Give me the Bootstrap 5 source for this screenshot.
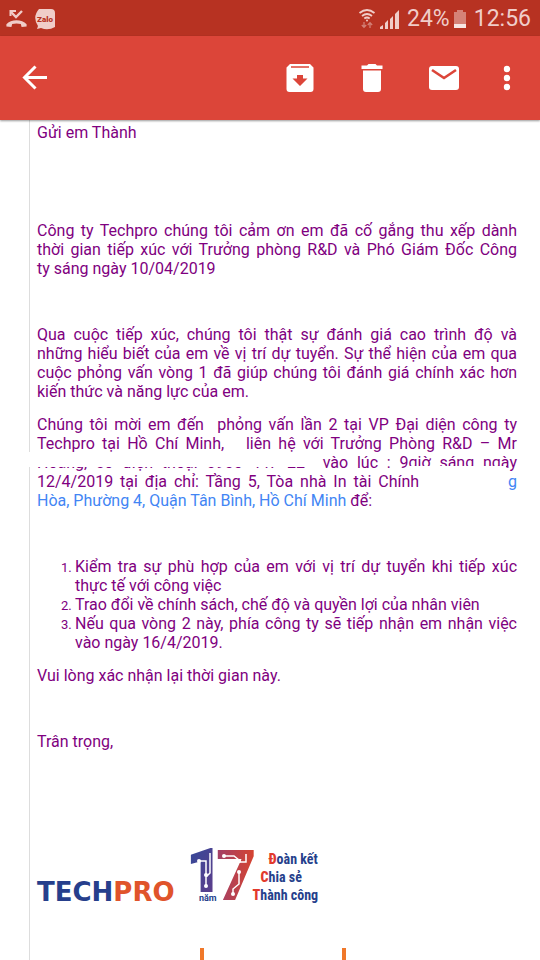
<!DOCTYPE html>
<html lang="vi">
<head>
<meta charset="utf-8">
<meta name="viewport" content="width=device-width, initial-scale=1">
<title>Thư mời phỏng vấn</title>
<link rel="stylesheet" href="https://cdn.jsdelivr.net/npm/bootstrap@5.3.0/dist/css/bootstrap.min.css">
<style>
body{font-family:Roboto,sans-serif;background:#fff;overflow-x:hidden}
.status{background:#b73222;color:#f0cdc9;height:36px;font-size:23px;line-height:34px;padding:2px 9px 0 6px}
.status svg{flex:none}
.appbar{background:#dc4539;height:84px;padding:0 17px 0 19px;box-shadow:0 1px 2px #0006;position:relative;z-index:2}
.tool{width:32px;height:32px;padding:0;border:0;background:none;color:#fff;line-height:0}
.actions{gap:40px}
.actions .tool:last-child{margin-left:-9px}
.mail{margin-left:29px;border-left:1px solid #ddd;padding:3px 23px 0 7px;color:#800080;font-size:16px;line-height:19px}
.mail p{margin:0 0 14px;text-align:justify}
.mail a{color:#4285f4;text-decoration:none}
.mail .gap-xl{margin-bottom:79px}
.mail .gap-lg{margin-bottom:47px}
.mail ol{margin:0 0 14px;padding-left:38px;text-align:justify}
.mail li::marker{font-size:13px}
.invite{position:relative}
.erased{position:absolute;left:-10px;width:280px;top:37px;height:15px;background:#fff}
.erased-low{position:absolute;right:11px;width:99px;top:51px;height:9px;background:#fff}
.blank{display:inline-block;width:82px}
.sign{margin-top:97px}
.brand-name{font-family:"DejaVu Sans",sans-serif;font-weight:700;font-size:26px;line-height:24px;color:#263f8c}
.brand-name span{color:#e0542b}
.sign svg{overflow:visible}
.slogan{font-family:"Roboto Condensed",Roboto,sans-serif;font-weight:700;font-size:14px;line-height:18px;color:#263f8c}
.slogan b{color:#e23a2c}
.ticks{margin:44px 0 0 163px;gap:138px}
.ticks i{width:4px;height:13px;background:#f0782a}
</style>
<script src="https://cdn.jsdelivr.net/npm/bootstrap@5.3.0/dist/js/bootstrap.bundle.min.js"></script>
</head>
<body>
<header>
<div class="status d-flex align-items-center">
<svg width="21" height="20" viewBox="0 0 21 20" fill="none" stroke="currentColor"><path d="M5 3l5 5 6-6" stroke-width="2.4"/><path d="M4.500 7V2H10" stroke-width="2"/><path d="M.4 17.500v-2.300C5 10 16 10 20.600 15.200v2.300l-5 .5-.8-3q-4.300-1-8.600 0l-.8 3z" fill="currentColor" stroke="none"/></svg>
<svg class="ms-2" width="20" height="21" viewBox="0 0 20 21"><path d="M4 0h12q4 0 4 4v14q-7 4-14 1l-4 1 1-3Q-3 8 4 0z" fill="currentColor"/><text x="10" y="13" text-anchor="middle" font-size="8" font-weight="900" fill="#b73222">Zalo</text></svg>
<svg class="ms-auto" width="18" height="20" viewBox="0 0 18 20" fill="none" stroke="currentColor" stroke-width="1.800"><path d="M1.500 4q7.500-6 15 0M4 7q5-4 10 0M6.300 9.500q2.700-2 5.400 0"/><circle cx="9" cy="11.500" r="1" fill="currentColor" stroke="none"/><path d="M6 13v5M3.800 16L6 18.300 8.200 16M12 19v-5M9.800 16L12 13.700l2.200 2.300" stroke-width="1.300" opacity=".5"/></svg>
<svg class="ms-1" width="19" height="19" viewBox="0 0 19 19" fill="currentColor"><path d="M0 19v-2l3-2v4zM5 19v-6l3-3v9zM10 19V9l3-3v13zM15 19V4l4-4v19z"/></svg>
<span class="ms-2">24%</span>
<svg class="ms-1" width="12" height="18" viewBox="0 0 12 18"><path d="M3 0h6v2h3v16H0V2h3z" fill="#d58278"/><path d="M0 14h12v4H0z" fill="#f8e6e4"/></svg>
<span class="ms-2">12:56</span>
</div>
<div class="appbar d-flex align-items-center justify-content-between">
<button class="tool" type="button" aria-label="Quay lại"><svg width="32" height="32" viewBox="0 0 32 32" fill="none" stroke="currentColor" stroke-width="3"><path d="M28 15.500H7M16.500 4.500l-11 11 11 11"/></svg></button>
<div class="actions d-flex">
<button class="tool" type="button" aria-label="Lưu trữ"><svg width="32" height="32" viewBox="0 0 32 32"><path d="M6 2h20l3.500 3.500V27a3 3 0 0 1-3 3h-21a3 3 0 0 1-3-3V5.500z" fill="#fff"/><path d="M7 4.300h18v1.400H7zM13 13h6v3.500h4.500L16 24l-7.500-7.500H13z" fill="#dc4539"/></svg></button>
<button class="tool" type="button" aria-label="Xóa"><svg width="32" height="32" viewBox="0 0 32 32" fill="#fff"><path d="M5.500 3.500H11L12.500 2h7L21 3.500h5.500V7h-21zM7 8.500h18V27a3 3 0 0 1-3 3H10a3 3 0 0 1-3-3z"/></svg></button>
<button class="tool" type="button" aria-label="Đánh dấu chưa đọc"><svg width="32" height="32" viewBox="0 0 32 32"><rect x="1" y="4" width="30" height="24" rx="3" fill="#fff"/><path d="M4 8l12 8 12-8" fill="none" stroke="#dc4539" stroke-width="2.600"/></svg></button>
<button class="tool" type="button" aria-label="Thêm"><svg width="32" height="32" viewBox="0 0 32 32" fill="#fff"><circle cx="16" cy="7" r="3.200"/><circle cx="16" cy="16" r="3.200"/><circle cx="16" cy="25" r="3.200"/></svg></button>
</div>
</div>
</header>
<main class="mail">
<p class="gap-xl">Gửi em Thành</p>
<p class="gap-lg">Công ty Techpro chúng tôi cảm ơn em đã cố gắng thu xếp dành thời&nbsp;gian tiếp xúc với Trưởng phòng R&amp;D và Phó Giám Đốc Công ty&nbsp;sáng&nbsp;ngày 10/04/2019</p>
<p>Qua cuộc tiếp xúc, chúng tôi thật sự đánh giá cao trình độ và những&nbsp;hiểu biết của em về vị trí dự tuyển. Sự thể hiện của em qua cuộc&nbsp;phỏng vấn vòng 1 đã giúp chúng tôi đánh giá chính xác hơn kiến&nbsp;thức và năng lực của em.</p>
<p class="invite gap-lg">Chúng tôi mời em đến&nbsp; phỏng vấn lần 2 tại VP Đại diện công ty Techpro tại Hồ Chí Minh,&nbsp;&nbsp; liên hệ với Trưởng Phòng R&amp;D – Mr Hoàng, số điện thoại 0905 447 22&nbsp; vào lúc : 9giờ sáng ngày 12/4/2019 tại địa chỉ: Tầng 5, Tòa nhà In tài Chính <span class="blank"></span><a href="#">g Hòa, Phường 4, Quận Tân Bình, Hồ Chí Minh</a> để:<span class="erased"></span><span class="erased-low"></span></p>
<ol><li>Kiểm tra sự phù hợp của em với vị trí dự tuyển khi tiếp xúc thực tế với công việc</li><li>Trao đổi về chính sách, chế độ và quyền lợi của nhân viên</li><li>Nếu qua vòng 2 này, phía công ty sẽ tiếp nhận em nhận việc vào ngày 16/4/2019.</li></ol>
<p class="gap-lg">Vui lòng xác nhận lại thời gian này.</p>
<p>Trân trọng,</p>
<div class="sign d-flex align-items-end">
<div class="brand-name">TECH<span>PRO</span></div>
<svg class="ms-3" width="62" height="56" viewBox="0 0 62 56" role="img" aria-label="17 năm">
<defs><linearGradient id="g1" x1="0" y1="0" x2="1" y2="1"><stop offset="0" stop-color="#2d4b9c"/><stop offset="1" stop-color="#6a3a86"/></linearGradient><linearGradient id="g7" x1="0" y1="0" x2="1" y2="0"><stop offset="0" stop-color="#a0406a"/><stop offset="1" stop-color="#d9442c"/></linearGradient></defs>
<text x="-4" y="43" font-size="60" font-weight="900" fill="url(#g1)" stroke="url(#g1)" stroke-width="2">1</text>
<text x="25" y="52" font-size="70" font-weight="900" fill="url(#g7)">7</text>
<g fill="none" stroke="#fff" stroke-width="1.500"><path d="M9 13h6v14M19 5v20l-4 4v8M33 8h10l5 4M55 6v8H48M48 24v12l-6 5v5"/></g>
<g fill="#fff"><circle cx="8" cy="13" r="2"/><circle cx="15" cy="27" r="2"/><circle cx="15" cy="38" r="2"/><circle cx="33" cy="8" r="2"/><circle cx="48" cy="13" r="2"/><circle cx="48" cy="24" r="2"/><circle cx="42" cy="46" r="2"/></g>
<text x="8" y="53" font-size="9" font-weight="700" fill="#263f8c">năm</text></svg>
<div class="slogan"><div class="ps-3"><b>Đ</b>oàn kết</div><div class="ps-2"><b>C</b>hia sẻ</div><div><b>T</b>hành công</div></div>
</div>
<div class="ticks d-flex"><i></i><i></i></div>
</main>
</body>
</html>
